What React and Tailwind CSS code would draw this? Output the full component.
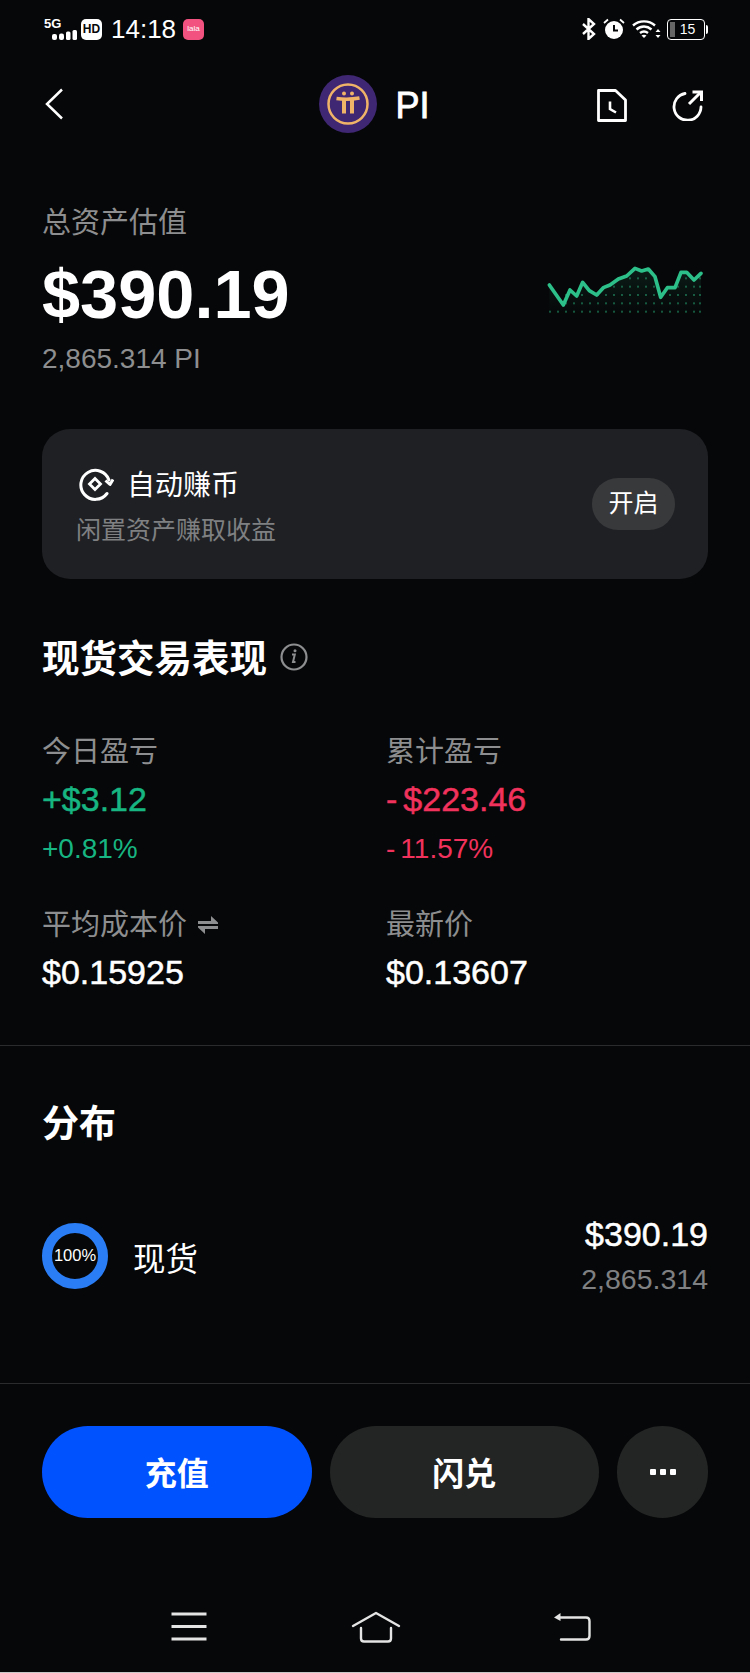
const sparkPoints = [
  [88, 135], [130, 195], [150, 150], [170, 168], [188, 127], [208, 152], [230, 165], [250, 143],
  [270, 135], [295, 117], [320, 108], [345, 85], [365, 93], [385, 87], [405, 110], [422, 172],
  [442, 143], [465, 143], [483, 97], [500, 97], [522, 120], [543, 100],
];

const StatusBar = () => (
  <div className="h-[58px] relative flex items-center justify-between pl-[44px] pr-[42px] text-white">
    <div className="flex items-center">
      <div className="w-[34px] h-[22px] flex flex-col items-start">
        <span className="text-[13px] leading-[11px] font-bold">5G</span>
        <svg width="25" height="10" viewBox="0 0 25 10" className="ml-[8px] mt-[1px]" fill="white">
          <rect x="0" y="4" width="5" height="6" rx="2" />
          <rect x="7" y="3.500" width="5" height="6.500" rx="2" />
          <rect x="14" y="1.500" width="4.500" height="8.500" rx="1.500" />
          <rect x="20.500" y="0" width="4.500" height="10" rx="1.500" />
        </svg>
      </div>
      <div className="w-[21px] h-[21px] ml-[3px] rounded-[5px] bg-white flex items-center justify-center text-[#060708] text-[12px] font-bold leading-none">
        HD
      </div>
      <span className="ml-[9px] text-[26px] leading-none">14:18</span>
      <div className="ml-[7px] w-[21px] h-[21px] rounded-[5px] bg-[#f2527f] flex items-center justify-center text-[8px] text-white leading-none">
        lala
      </div>
    </div>
    <div className="flex items-center">
      <svg width="14" height="22" viewBox="0 0 14 22" fill="none" stroke="white" strokeWidth="2.400">
        <path d="M1 6l11 10-5.500 5V1L12 6 1 16" />
      </svg>
      <svg width="22" height="22" viewBox="0 0 22 22" className="ml-[7px]">
        <circle cx="11" cy="12" r="9" fill="white" />
        <path d="M11 7v5.500h4" fill="none" stroke="#060708" strokeWidth="2" />
        <path d="M1 5l4-3.500M21 5l-4-3.500" fill="none" stroke="white" strokeWidth="1.800" />
      </svg>
      <svg width="29" height="20" viewBox="0 0 29 20" fill="none" stroke="white" strokeWidth="2.400" className="ml-[7px]">
        <path d="M1 6.500C7 1 17 1 23 6.500" />
        <path d="M4.500 10.500C9 6.500 15 6.500 19.500 10.500" />
        <path d="M8 14c2.500-2 5.500-2 8 0" />
        <path d="M12 19l-2.500-2.500c1.500-1 3.500-1 5 0z" fill="white" stroke="none" />
        <path d="M26 10l-2.500 3h5zM26 19l-2.500-3h5z" fill="white" stroke="none" />
      </svg>
      <div className="ml-[6px] w-[38px] h-[21px] rounded-[4px] border-[1.500px] border-white relative flex items-center justify-center text-[14px] leading-none">
        <div className="absolute left-[2px] top-[2px] bottom-[2px] w-[5px] bg-[#666]" />
        <span className="ml-[3px]">15</span>
      </div>
      <div className="w-[2px] h-[9px] ml-[1px] rounded-r-sm bg-white" />
    </div>
  </div>
);

const PiLogo = () => (
  <svg width="58" height="58" viewBox="0 0 58 58">
    <circle cx="29" cy="29" r="29" fill="#3f2773" />
    <circle cx="29" cy="29" r="19.500" fill="none" stroke="#f0b468" strokeWidth="2.500" />
    <path d="M17.500 23.500q11.500 1.500 23-.5" stroke="#f0b468" strokeWidth="3.500" fill="none" />
    <path d="M25 24v14.500M33 24v14.500" stroke="#f0b468" strokeWidth="4" fill="none" />
    <circle cx="25" cy="18.500" r="2" fill="#f0b468" />
    <circle cx="33" cy="18.500" r="2" fill="#f0b468" />
  </svg>
);

const Header = () => (
  <div className="mt-[17px] h-[58px] pl-[45px] pr-[46px] grid grid-cols-[1fr_auto_1fr] items-center text-white">
    <svg width="18" height="32" viewBox="0 0 18 32" fill="none" stroke="white" strokeWidth="2.500">
      <path d="M17 1.500L2 16l15 14.500" />
    </svg>
    <div className="flex items-center">
      <PiLogo />
      <span className="ml-[18px] pt-[4px] text-[36px] leading-none [-webkit-text-stroke:0.8px_white]">PI</span>
    </div>
    <div className="flex items-center justify-end pt-[2px]">
      <svg width="30" height="33" viewBox="0 0 30 33" fill="none" stroke="white" strokeWidth="2.800">
        <path d="M1.500 1.500h17L28.500 11v20.500h-27z" strokeLinejoin="round" />
        <path d="M13 12.500v7.500l6 3.500" strokeWidth="2.600" />
      </svg>
      <svg width="32" height="32" viewBox="0 0 32 32" fill="none" stroke="white" strokeWidth="2.800" className="ml-[45px]">
        <path d="M13 4.500A13.500 13.500 0 1 0 29 18" strokeLinecap="round" />
        <path d="M17 15L28 4" strokeWidth="3" />
        <path d="M20.500 3h9v9" strokeWidth="3" />
      </svg>
    </div>
  </div>
);

const Spark = () => (
  <svg width="200" height="90" viewBox="0 0 600 270" className="shrink-0">
    <defs>
      <linearGradient id="sparkFade" x1="0" y1="0" x2="0" y2="1">
        <stop offset="0" stopColor="#2bb983" stopOpacity="0.12" />
        <stop offset="1" stopColor="#2bb983" stopOpacity="0" />
      </linearGradient>
    </defs>
    <polygon
      points={`88,225 ${sparkPoints.map((p) => p.join(',')).join(' ')} 543,225`}
      fill="url(#sparkFade)"
    />
    {[115, 140, 165, 190, 215].map((y) =>
      [90, 114, 138, 162, 186, 210, 234, 258, 282, 306, 330, 354, 378, 402, 426, 450, 474, 498, 522, 540].map((x) => {
        const lineY = sparkPoints.find((p) => p[0] >= x)?.[1] ?? 100;
        if (y < lineY + 14) return null;
        return <rect key={`${x}-${y}`} x={x - 3} y={y - 3} width="6" height="6" fill="#2bb983" opacity="0.45" />;
      })
    )}
    <polyline
      points={sparkPoints.map((p) => p.join(',')).join(' ')}
      fill="none"
      stroke="#2dbf89"
      strokeWidth="11"
      strokeLinejoin="round"
      strokeLinecap="round"
    />
  </svg>
);

const Stat = ({ label, value, sub, valueColor, subColor, swap }) => (
  <div>
    <div className="h-[40px] flex items-center text-[29px] leading-[40px] text-[#8d8e8f]">
      {label}
      {swap && (
        <svg width="20" height="20" viewBox="0 0 20 20" fill="#8d8e8f" className="ml-[11px]">
          <path d="M0 6h13V1l7 6.500V9H0zM20 11H0v1.500L7 19v-5h13z" />
        </svg>
      )}
    </div>
    <div className={`mt-[7px] h-[40px] text-[34px] leading-[40px] [-webkit-text-stroke:0.5px_currentColor] ${valueColor}`}>{value}</div>
    {sub && <div className={`mt-[10px] h-[40px] text-[28px] leading-[40px] ${subColor}`}>{sub}</div>}
  </div>
);

const App = () => (
  <div
    className="w-[750px] h-[1673px] overflow-hidden bg-[#060708] flex flex-col border-b border-[#c8c8c8]"
    style={{ fontFamily: '"Liberation Sans", "Noto Sans CJK SC", sans-serif' }}
  >
    <StatusBar />
    <Header />

    <div className="mt-[70px] px-[42px] flex items-start justify-between">
      <div>
        <div className="h-[40px] text-[29px] leading-[40px] text-[#8d8e8f]">总资产估值</div>
        <div className="mt-[12px] h-[80px] text-[68.500px] leading-[80px] font-bold text-white">$390.19</div>
        <div className="mt-[4px] h-[40px] text-[28px] leading-[40px] text-[#8d8e8f]">2,865.314 PI</div>
      </div>
      <div className="mt-[37px] -mr-[12px]">
        <Spark />
      </div>
    </div>

    <div className="mt-[50px] mx-[42px] h-[150px] rounded-[28px] bg-[#1f2024] pl-[34px] pr-[33px] flex items-center justify-between">
      <div>
        <div className="flex items-center h-[40px] pl-[2px] text-[28px] leading-[40px] text-white">
          <svg width="36" height="34" viewBox="0 0 36 34" fill="none" stroke="white" strokeWidth="3">
            <path d="M29 26.500A14.500 14.500 0 1 1 31 13" strokeLinecap="round" />
            <path d="M27.500 13.500l4.500 4 3-5" strokeLinejoin="round" />
            <path d="M17 11.500L22.500 17 17 22.500 11.500 17z" strokeWidth="2.800" />
          </svg>
          <span className="ml-[13px] pt-[4px]">自动赚币</span>
        </div>
        <div className="mt-[8px] -mb-[4px] h-[36px] text-[25px] leading-[36px] text-[#7f8082]">闲置资产赚取收益</div>
      </div>
      <div className="w-[83px] h-[52px] rounded-full bg-[#38393b] flex items-center justify-center text-[25px] text-white">
        开启
      </div>
    </div>

    <div className="mt-[55px] px-[42px] h-[50px] flex items-center text-[37.500px] leading-[50px] font-bold text-white">
      现货交易表现
      <svg width="28" height="28" viewBox="0 0 28 28" fill="none" className="ml-[13px] -mt-[4px]">
        <circle cx="14" cy="14" r="12.500" stroke="#8d8e8f" strokeWidth="2.200" />
        <path d="M12 11.500h2.800l-1.800 7.500h2.500" stroke="#8d8e8f" strokeWidth="2" />
        <circle cx="15" cy="7.800" r="1.500" fill="#8d8e8f" />
      </svg>
    </div>

    <div className="mt-[48px] px-[42px] grid grid-cols-[344px_1fr] gap-y-[36px]">
      <Stat label="今日盈亏" value="+$3.12" sub="+0.81%" valueColor="text-[#17b581]" subColor="text-[#17b581]" />
      <Stat
        label="累计盈亏"
        value={<><span className="mr-[6px]">-</span>$223.46</>}
        sub={<><span className="mr-[5px]">-</span>11.57%</>}
        valueColor="text-[#f0325c]"
        subColor="text-[#f0325c]"
      />
      <Stat label="平均成本价" value="$0.15925" valueColor="text-white" swap />
      <Stat label="最新价" value="$0.13607" valueColor="text-white" />
    </div>

    <div className="mt-[53px] h-px bg-[#2a2b2c]" />

    <div className="mt-[54px] px-[42px] h-[50px] text-[37px] leading-[50px] font-bold text-white">分布</div>

    <div className="mt-[62px] px-[42px] flex items-center justify-between">
      <div className="flex items-center">
        <div className="w-[66px] h-[66px] rounded-full border-[10px] border-[#2a7df5] flex items-center justify-center text-[16.500px] leading-none text-white">
          100%
        </div>
        <span className="ml-[25px] pt-[10px] text-[32.500px] text-white">现货</span>
      </div>
      <div className="text-right">
        <div className="h-[44px] text-[34px] leading-[44px] [-webkit-text-stroke:0.5px_white] text-white">$390.19</div>
        <div className="mt-[3px] h-[40px] text-[28.500px] leading-[40px] text-[#7f8082]">2,865.314</div>
      </div>
    </div>

    <div className="mt-[84px] h-px bg-[#2a2b2c]" />

    <div className="mt-[42px] px-[42px] flex items-center gap-[18px]">
      <div className="w-[270px] h-[92px] pt-[4px] rounded-full bg-[#0052ff] flex items-center justify-center text-[32px] font-bold text-white">
        充值
      </div>
      <div className="w-[270px] h-[92px] pt-[4px] rounded-full bg-[#232424] flex items-center justify-center text-[32px] font-bold text-white">
        闪兑
      </div>
      <div className="w-[91px] h-[92px] rounded-full bg-[#232424] flex items-center justify-center gap-[4px]">
        <span className="w-[6px] h-[6px] rounded-[1px] bg-white" />
        <span className="w-[6px] h-[6px] rounded-[1px] bg-white" />
        <span className="w-[6px] h-[6px] rounded-[1px] bg-white" />
      </div>
    </div>

    <div className="mt-[93px] pl-[171px] flex items-center">
      <svg width="36" height="30" viewBox="0 0 36 30" fill="none" stroke="#e4e4e4" strokeWidth="3">
        <path d="M0.500 2h35M0.500 14.500h35M0.500 27h35" />
      </svg>
      <svg width="50" height="32" viewBox="0 0 50 32" fill="none" stroke="#e4e4e4" strokeWidth="2.400" strokeLinecap="round" strokeLinejoin="round" className="ml-[144px]">
        <path d="M2 15L25 2l23 13" />
        <path d="M10 17v10.500q0 3 3 3h24q3 0 3-3V17" />
      </svg>
      <svg width="38" height="30" viewBox="0 0 38 30" fill="none" stroke="#e4e4e4" strokeWidth="2.400" strokeLinecap="round" className="ml-[152px]">
        <path d="M6 5.500h27q3.500 0 3.500 3.500v15q0 3.500-3.500 3.500H8" />
        <path d="M1 5.500L7.500 1v8z" fill="#e4e4e4" stroke="none" />
      </svg>
    </div>
  </div>
);

export default App;
